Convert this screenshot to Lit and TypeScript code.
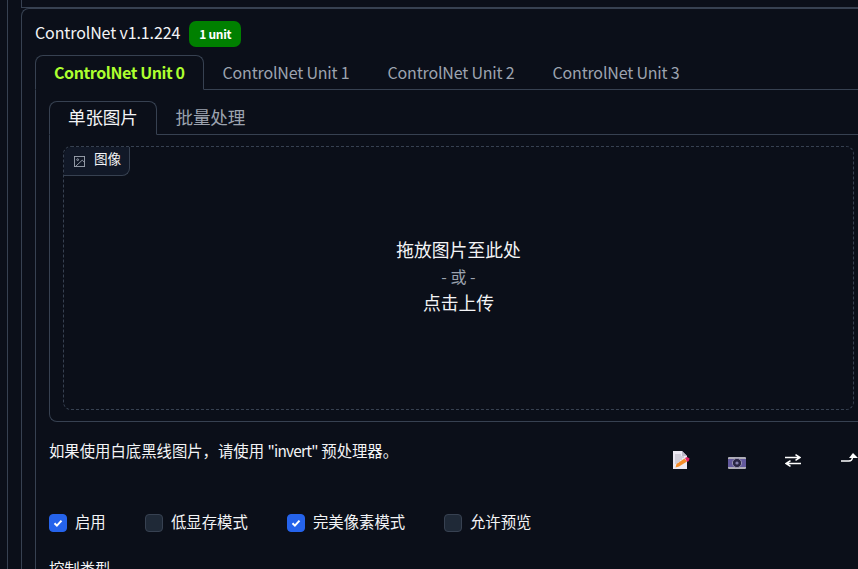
import { LitElement, html, css, svg } from "lit";
import { customElement } from "lit/decorators.js";

const UNITS = ["ControlNet Unit 0", "ControlNet Unit 1", "ControlNet Unit 2", "ControlNet Unit 3"];
const CHECKS = [
  { label: "启用", on: true, width: 96 },
  { label: "低显存模式", on: false, width: 142 },
  { label: "完美像素模式", on: true, width: 157 },
  { label: "允许预览", on: false, width: 100 },
];

const noteIcon = svg`<svg width="17" height="18" viewBox="0 0 17 18">
  <path d="M0 0h9l5 5v13H0z" fill="#ece8f2"/>
  <path d="M9 0v5h5z" fill="#bdb8c8"/>
  <path d="M2 4h6M2 6h9M2 8h7M2 10h5M2 12h3" stroke="#a9a6b4" stroke-width=".8"/>
  <path d="M2.5 16.5l1-3.5 8-5.5 2.5 3-8 5z" fill="#f58d2a"/>
  <path d="M12 7l2-1 2.6 1.4-1 2.8-1.6.6z" fill="#e8246a"/>
</svg>`;

const cameraIcon = svg`<svg width="18" height="12" viewBox="0 0 18 12">
  <path d="M1 0h16a1 1 0 0 1 1 1v10a1 1 0 0 1-1 1H1a1 1 0 0 1-1-1V1a1 1 0 0 1 1-1z" fill="#b0aeb8"/>
  <rect x="0" y="2" width="18" height="8" fill="#62589c"/>
  <circle cx="9" cy="6" r="4.6" fill="#2a2644" stroke="#a09cb8" stroke-width=".9"/>
  <circle cx="9" cy="6" r="1.6" fill="#8480ac"/>
</svg>`;

const swapIcon = svg`<svg width="16" height="13" viewBox="0 0 16 13" fill="none" stroke="#fff" stroke-width="1.5">
  <path d="M0 3.5h15M10.5 .6l4.5 2.9-4.5 2.9M16 9.5H1M5.5 6.6L1 9.5l4.5 2.9"/>
</svg>`;

const hookIcon = svg`<svg width="17" height="9" viewBox="0 0 17 9" fill="none" stroke="#fff" stroke-width="1.4">
  <path d="M0 8h8q3 0 3.4-3V3"/>
  <path d="M12 0l5 5H8z" fill="#fff" stroke="none"/>
</svg>`;

@customElement("app-root")
export class AppRoot extends LitElement {
  render() {
    return html`
      <div class="page">
        <div class="gutter">
          <div class="prev"></div>
          <section class="panel">
            <header class="title">
              <span class="name">ControlNet v1.1.224</span>
              <span class="badge">1 unit</span>
            </header>
            <nav class="tabs">
              ${UNITS.map((u, i) => html`<button class="tab ${i === 0 ? "active" : ""}">${u}</button>`)}
            </nav>
            <div class="unit">
              <nav class="tabs sub">
                <button class="tab active">单张图片</button>
                <button class="tab">批量处理</button>
              </nav>
              <div class="box">
                <div class="drop">
                  <div class="chip">
                    <svg width="11" height="11" viewBox="0 0 24 24" fill="none" stroke="#9ca3af" stroke-width="2">
                      <rect x="1" y="1" width="22" height="22"></rect>
                      <circle cx="8" cy="8" r="2"></circle>
                      <path d="M23 14l-5-5L3 23"></path>
                    </svg>
                    <span>图像</span>
                  </div>
                  <div class="big">拖放图片至此处</div>
                  <div class="or">- 或 -</div>
                  <div class="big">点击上传</div>
                </div>
              </div>
              <div class="hint-row">
                <p class="hint">如果使用白底黑线图片，请使用 <span class="latin">"invert"</span> 预处理器。</p>
                <div class="tools">
                  <span class="tool note">${noteIcon}</span>
                  <span class="tool cam">${cameraIcon}</span>
                  <span class="tool swap">${swapIcon}</span>
                  <span class="tool hook">${hookIcon}</span>
                </div>
              </div>
              <div class="checks">
                ${CHECKS.map(
                  (c) => html`<label class="check" style="width:${c.width}px">
                    <span class="cb ${c.on ? "on" : ""}">
                      ${c.on
                        ? html`<svg width="12" height="12" viewBox="0 0 12 12" fill="none" stroke="#fff" stroke-width="2"><path d="M2.5 6.2l2.4 2.4 4.6-5"></path></svg>`
                        : ""}
                    </span>
                    <span class="label">${c.label}</span>
                  </label>`
                )}
              </div>
              <div class="next">控制类型</div>
            </div>
          </section>
        </div>
      </div>
    `;
  }

  static styles = css`
    :host {
      display: block;
      font-family: "Noto Sans CJK SC", "Noto Sans", sans-serif;
      color: #f3f4f6;
    }
    .page {
      width: 858px;
      height: 569px;
      overflow: hidden;
      background: #0b0f19;
      padding-left: 7px;
      box-sizing: border-box;
    }
    .gutter {
      width: 900px;
      height: 569px;
      border-left: 1px solid #374151;
      padding-left: 13px;
      box-sizing: border-box;
    }
    .prev {
      height: 8px;
      box-sizing: border-box;
      border-left: 1px solid #374151;
      border-bottom: 1px solid #374151;
    }
    .panel {
      height: 561px;
      box-sizing: border-box;
      border-left: 1px solid #374151;
      border-top: 1px solid #374151;
      border-top-left-radius: 8px;
      padding: 12px 0 0 13px;
    }
    .title {
      display: flex;
      align-items: center;
      gap: 9px;
      height: 26px;
    }
    .name {
      font-size: 16px;
      letter-spacing: -0.12px;
      margin-top: -5px;
    }
    .badge {
      background: #008000;
      color: #fff;
      font-size: 12px;
      font-weight: 700;
      letter-spacing: -0.3px;
      height: 26px;
      line-height: 25px;
      padding: 0 10px;
      border-radius: 7px;
      box-sizing: border-box;
    }
    .tabs {
      display: flex;
      margin-top: 8px;
      height: 35px;
      box-sizing: border-box;
      border-bottom: 1px solid #374151;
    }
    .tab {
      font: inherit;
      font-size: 16px;
      letter-spacing: -0.18px;
      height: 35px;
      background: none;
      color: #9ca3af;
      padding: 0 18px 2px;
      border: 1px solid transparent;
      border-radius: 8px 8px 0 0;
      white-space: nowrap;
    }
    .tab.active {
      color: #adff2f;
      font-weight: 700;
      letter-spacing: -0.42px;
      background: #0b0f19;
      border-color: #374151;
      border-bottom-color: #0b0f19;
    }
    .unit {
      border-left: 1px solid #374151;
      padding-left: 13px;
    }
    .tabs.sub {
      margin-top: 0;
      padding-top: 11px;
      height: 45px;
    }
    .tabs.sub .tab {
      font-size: 17.6px;
      letter-spacing: -0.2px;
      height: 34px;
      padding-bottom: 4px;
    }
    .tabs.sub .tab.active {
      color: #f3f4f6;
      font-weight: 400;
    }
    .box {
      height: 287px;
      box-sizing: border-box;
      border-left: 1px solid #374151;
      border-bottom: 1px solid #374151;
      border-bottom-left-radius: 8px;
      padding: 11px 0 0 13px;
    }
    .drop {
      position: relative;
      width: 791px;
      height: 264px;
      box-sizing: border-box;
      padding-bottom: 4px;
      border: 1px dashed #374151;
      border-radius: 8px;
      display: flex;
      flex-direction: column;
      align-items: center;
      justify-content: center;
    }
    .chip {
      position: absolute;
      left: 0;
      top: 0;
      display: flex;
      align-items: center;
      gap: 9px;
      height: 28px;
      padding: 0 8px 0 10px;
      font-size: 13.6px;
      background: #111827;
      border-right: 1px solid #374151;
      border-bottom: 1px solid #374151;
      border-radius: 8px 0 8px 0;
    }
    .chip span {
      margin-top: -6px;
    }
    .big {
      font-size: 17.8px;
      line-height: 26.5px;
    }
    .or {
      font-size: 16px;
      line-height: 26.5px;
      color: #9ca3af;
    }
    .hint-row {
      display: flex;
      align-items: flex-start;
      margin-top: 18px;
      height: 52px;
    }
    .hint {
      margin: 0;
      width: 604px;
      font-size: 15.36px;
      line-height: 20px;
    }
    .latin {
      letter-spacing: -0.75px;
    }
    .tools {
      display: flex;
    }
    .tool {
      width: 56px;
      display: flex;
      justify-content: center;
    }
    .tool.note {
      padding-top: 11px;
    }
    .tool.cam {
      padding-top: 17px;
    }
    .tool.swap {
      padding-top: 14px;
    }
    .tool.hook {
      padding-top: 13px;
    }
    .checks {
      display: flex;
      margin-top: 22px;
    }
    .check {
      display: flex;
      align-items: center;
      gap: 8px;
      height: 18px;
      font-size: 15.36px;
    }
    .label {
      margin-top: -5px;
    }
    .cb {
      width: 18px;
      height: 18px;
      box-sizing: border-box;
      border-radius: 4px;
      background: #1f2937;
      border: 1px solid #374151;
      display: flex;
      align-items: center;
      justify-content: center;
    }
    .cb.on {
      background: #2563eb;
      border-color: #2563eb;
    }
    .next {
      margin-top: 26px;
      font-size: 15.36px;
      line-height: 20px;
    }
  `;
}
